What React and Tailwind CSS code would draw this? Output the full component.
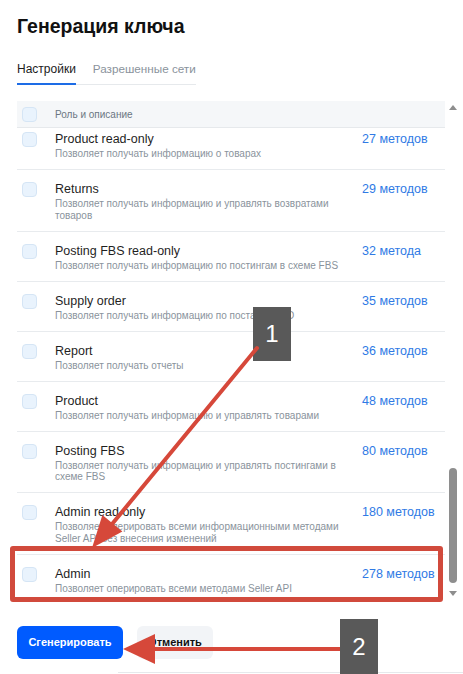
import React from 'react';

const roles = [
  { name: 'Product read-only', desc: ['Позволяет получать информацию о товарах'], count: '27 методов' },
  { name: 'Returns', desc: ['Позволяет получать информацию и управлять возвратами', 'товаров'], count: '29 методов' },
  { name: 'Posting FBS read-only', desc: ['Позволяет получать информацию по постингам в схеме FBS'], count: '32 метода' },
  { name: 'Supply order', desc: ['Позволяет получать информацию по поставке FBO'], count: '35 методов' },
  { name: 'Report', desc: ['Позволяет получать отчеты'], count: '36 методов' },
  { name: 'Product', desc: ['Позволяет получать информацию и управлять товарами'], count: '48 методов' },
  { name: 'Posting FBS', desc: ['Позволяет получать информацию и управлять постингами в', 'схеме FBS'], count: '80 методов' },
  { name: 'Admin read only', desc: ['Позволяет оперировать всеми информационными методами', 'Seller API без внесения изменений'], count: '180 методов' },
  { name: 'Admin', desc: ['Позволяет оперировать всеми методами Seller API'], count: '278 методов' },
];

const Checkbox = () => (
  <div className="w-[15px] h-[15px] shrink-0 rounded-[4px] bg-[#e9f3fd] border border-[#d5e5f5]" />
);

const RoleRow = ({ role, last }) => (
  <div className={`flex items-start pl-[5px] pt-[11px] pb-[9.5px] ${last ? '' : 'border-b border-[#e8ebee]'}`}>
    <div className="pt-[1px]">
      <Checkbox />
    </div>
    <div className="ml-[18px] w-[307px] shrink-0">
      <div className="text-[12.5px] leading-4 text-[#1f1f1f]">{role.name}</div>
      <div className="mt-px text-[10px] leading-[11.5px] text-[#8a939c] whitespace-nowrap">
        {role.desc.map((line, i) => (
          <div key={i}>{line}</div>
        ))}
      </div>
    </div>
    <div className="text-[12.5px] leading-4 text-[#2f7ae5] whitespace-nowrap">{role.count}</div>
  </div>
);

export default function App() {
  return (
    <div
      className="relative w-[463px] h-[674px] overflow-hidden bg-white"
      style={{ fontFamily: '"Liberation Sans", Arial, sans-serif' }}
    >
      <div className="pl-[17px] pt-[14px]">
        <h1 className="text-[19.5px] leading-6 font-bold text-[#111]">Генерация ключа</h1>

        {/* tabs */}
        <div className="mt-[23px] inline-flex gap-[17px] border-b border-[#e6e9ec]">
          <div className="-mb-px pb-[6px] border-b-2 border-[#1d6ce6] text-[12px] leading-4 text-[#1b1b1b]">
            Настройки
          </div>
          <div className="pb-[7px] text-[11.7px] leading-4 text-[#8a939c]">Разрешенные сети</div>
        </div>

        {/* table + scrollbar */}
        <div className="mt-[16px] flex">
          <div className="w-[428px]">
            <div className="h-[27px] flex items-center pl-[5px] bg-[#f5f7f9] border-b border-[#e6e9ec]">
              <Checkbox />
              <span className="ml-[18px] text-[10px] text-[#6b7682]">Роль и описание</span>
            </div>
            <div className="h-[474px] overflow-hidden">
              <div className="-mt-[8px]">
                {roles.map((r, i) => (
                  <RoleRow key={r.name} role={r} last={i === roles.length - 1} />
                ))}
              </div>
            </div>
          </div>
          <div className="w-[15px] flex flex-col items-center">
            <div className="mt-[4px] w-0 h-0 border-l-[4px] border-r-[4px] border-b-[5px] border-l-transparent border-r-transparent border-b-[#8e8e8e]" />
            <div className="flex-1" />
            <div className="w-[8px] h-[115px] rounded-full bg-[#8e8e8e]" />
            <div className="mt-[8px] mb-[6px] w-0 h-0 border-l-[4px] border-r-[4px] border-t-[5px] border-l-transparent border-r-transparent border-t-[#8e8e8e]" />
          </div>
        </div>

        {/* buttons */}
        <div className="mt-[24px] flex gap-[14px]">
          <button className="h-[33px] w-[106px] rounded-[6px] bg-[#005bff] text-white text-[11px] font-bold">
            Сгенерировать
          </button>
          <button className="h-[33px] w-[76px] rounded-[6px] bg-[#f2f4f7] text-[#111] text-[11px] font-bold">
            Отменить
          </button>
        </div>
        <div className="mt-[13px] ml-[101px] h-px bg-[#e6e9ec]" />
      </div>

      {/* annotations */}
      <div className="absolute left-[10px] top-[546px] w-[433px] h-[56px] border-[5px] border-[#d14a3c] rounded-[3px]" />
      <div className="absolute left-[253px] top-[307px] w-[38px] h-[54px] bg-[#595959] flex items-center justify-center text-white text-[24px] leading-none">
        1
      </div>
      <div className="absolute left-[340px] top-[619px] w-[38px] h-[60px] bg-[#595959] flex items-start justify-center pt-[16px] text-white text-[24px] leading-none">
        2
      </div>
      <svg className="absolute inset-0" width="463" height="674" viewBox="0 0 463 674">
        <line x1="257" y1="348" x2="108" y2="529" stroke="#d6483a" strokeWidth="4" strokeLinecap="round" />
        <polygon points="92,548 122.4,531.6 102.4,515" fill="#d6483a" />
        <line x1="340" y1="649" x2="150" y2="649" stroke="#d6483a" strokeWidth="4" />
        <polygon points="123,649 155,634 155,664" fill="#d6483a" />
      </svg>
    </div>
  );
}
